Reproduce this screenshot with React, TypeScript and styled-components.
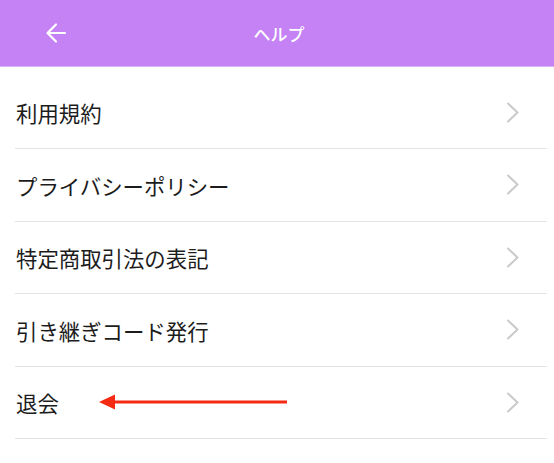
import React from "react";
import styled, { createGlobalStyle } from "styled-components";

const GlobalStyle = createGlobalStyle`
  html, body {
    margin: 0;
    padding: 0;
    background: #ffffff;
    font-family: "Noto Sans CJK JP", "Noto Sans", sans-serif;
  }
`;

const Page = styled.div`
  width: 554px;
  min-height: 463px;
  background: #ffffff;
`;

const Header = styled.header`
  height: 66px;
  background: #c482f5;
  border-bottom: 1px solid #d9b3f8;
  display: grid;
  grid-template-columns: 100px 1fr 100px;
  align-items: center;
  box-sizing: content-box;
`;

const BackButton = styled.button`
  background: none;
  border: none;
  padding: 0 0 0 45px;
  height: 100%;
  display: flex;
  align-items: center;
  cursor: pointer;
`;

const Title = styled.h1`
  margin: 0;
  text-align: center;
  color: #ffffff;
  font-size: 17px;
  font-weight: 500;
  letter-spacing: 0;
  padding-left: 4px;
`;

const List = styled.ul`
  list-style: none;
  margin: 9.5px 7px 0 15px;
  padding: 0;
`;

const Row = styled.li`
  position: relative;
  height: 71.5px;
  border-bottom: 1px solid #e3e3e3;
  display: flex;
  align-items: center;
  justify-content: space-between;
  padding-right: 27px;
`;

const Label = styled.span`
  font-size: 21.4px;
  color: #1c1c1c;
  line-height: 1;
  padding-left: 1px;
  padding-top: 1px;
`;

const Annotation = styled.svg`
  position: absolute;
  left: 84px;
  top: 26px;
`;

const Chevron = () => (
  <svg width="14" height="21" viewBox="0 0 14 21">
    <polyline
      points="2,1.5 11.5,10.5 2,19.5"
      fill="none"
      stroke="#cacaca"
      strokeWidth="2"
      strokeLinecap="round"
      strokeLinejoin="round"
    />
  </svg>
);

const BackArrow = () => (
  <svg width="22" height="22" viewBox="0 0 22 22">
    <path
      d="M20 11H2.5M11 2.5L2.5 11L11 19.5"
      fill="none"
      stroke="#ffffff"
      strokeWidth="2.2"
      strokeLinecap="round"
      strokeLinejoin="round"
    />
  </svg>
);

const items = [
  "利用規約",
  "プライバシーポリシー",
  "特定商取引法の表記",
  "引き継ぎコード発行",
  "退会",
];

export default function App() {
  return (
    <Page>
      <GlobalStyle />
      <Header>
        <BackButton aria-label="戻る">
          <BackArrow />
        </BackButton>
        <Title>ヘルプ</Title>
        <div />
      </Header>
      <List>
        {items.map((t) => (
          <Row key={t}>
            <Label>{t}</Label>
            {t === "退会" && (
              <Annotation width="190" height="18" viewBox="0 0 190 18">
                <polygon points="0,9 16,1.5 16,16.5" fill="#f52a12" />
                <rect x="14" y="7.5" width="174" height="3" fill="#f52a12" />
              </Annotation>
            )}
            <Chevron />
          </Row>
        ))}
      </List>
    </Page>
  );
}
